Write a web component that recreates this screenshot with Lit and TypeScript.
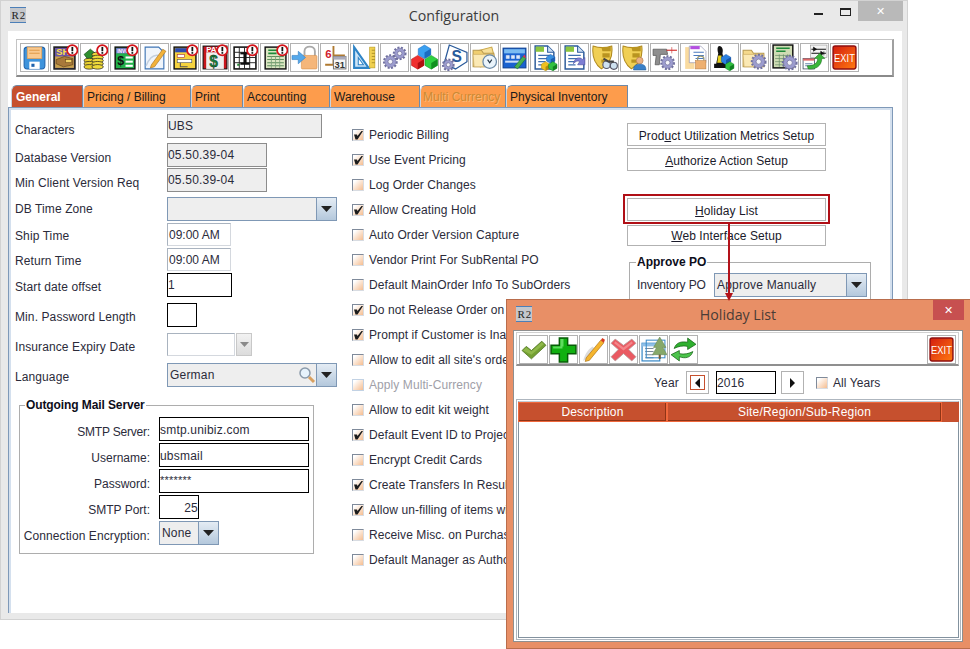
import { LitElement, css, html, svg } from "lit";
import { customElement } from "lit/decorators.js";

const gear = (x: number, y: number, r: number, fill = "#9c9ccf") => svg`
  <circle cx=${x} cy=${y} r=${r} fill="none" stroke="#6f6fa0" stroke-width="2.2" stroke-dasharray="1.9 1.4"></circle>
  <circle cx=${x} cy=${y} r=${r - 0.6} fill=${fill} stroke="#77779f" stroke-width=".6"></circle>
  <circle cx=${x} cy=${y} r=${r * 0.38} fill="#f4f4fa" stroke="#66668f" stroke-width=".6"></circle>`;

const alert = svg`
  <circle cx="20.5" cy="6" r="5" fill="#fff" stroke="#d3151b" stroke-width="1.7"></circle>
  <rect x="19.7" y="2.8" width="1.7" height="4.2" fill="#111"></rect>
  <rect x="19.7" y="7.8" width="1.7" height="1.6" fill="#111"></rect>`;

const cube = (x: number, y: number, s: number, c: string, d: string) => svg`
  <path d="M${x} ${y + s * 0.3}L${x + s * 0.5} ${y}L${x + s} ${y + s * 0.3}V${y + s * 0.8}L${x + s * 0.5} ${y + s * 1.1}L${x} ${y + s * 0.8}Z" fill=${c} stroke=${d} stroke-width=".5"></path>
  <path d="M${x + s * 0.5} ${y + s * 0.6}L${x + s} ${y + s * 0.3}V${y + s * 0.8}L${x + s * 0.5} ${y + s * 1.1}Z" fill=${d}></path>`;

const doc = svg`
  <path d="M4 2H16L22 8V24H4Z" fill="#fff" stroke="#2a5a9a" stroke-width="1.4"></path>
  <path d="M16 2V8H22" fill="#cfe0f4" stroke="#2a5a9a"></path>
  <rect x="4.5" y="2.5" width="8" height="5" fill="#8cc63f"></rect>
  <path d="M7 11H19M7 14H19M7 17H14M7 20H14" stroke="#3f6fb0" stroke-width="1.2"></path>`;

const shield = svg`
  <path d="M2 2C8 4 14 4 20 2C21 10 20 18 10 24C3 19 1 10 2 2Z" fill="#f0cf55" stroke="#b08a20"></path>
  <path d="M10 3H19V7H11ZM11 9H18V13H11ZM10 15H15V18H10Z" fill="#b99420"></path>`;

const folder = (fill = "#f5d98c") => svg`
  <path d="M2 6H10L12 9H22V22H2Z" fill=${fill} stroke="#b89a50"></path>
  <path d="M2 10H22L21 22H3Z" fill="#fbe9b4" stroke="#c8a860" stroke-width=".6"></path>`;

const exitIcon = svg`
  <defs><linearGradient id="ex" x1="0" y1="0" x2="1" y2="1"><stop offset="0" stop-color="#d41d10"></stop><stop offset="1" stop-color="#ff7a10"></stop></linearGradient></defs>
  <rect x="2" y="2" width="22" height="22" rx="2" fill="url(#ex)" stroke="#8f0f0f" stroke-width="1.4"></rect>
  <text x="13" y="17" text-anchor="middle" font-size="10" fill="#fff" textLength="20" lengthAdjust="spacingAndGlyphs" font-family="Liberation Sans, sans-serif">EXIT</text>`;

const TOP_ICONS = [
  // save
  svg`<rect x="3" y="3" width="20" height="21" rx="3" fill="#3d93dc" stroke="#1d62ad"></rect>
    <rect x="6" y="3" width="14" height="11" fill="#f9c98f" stroke="#e6a050" stroke-width=".7"></rect>
    <path d="M8 6H18M8 9H18" stroke="#e09a4a"></path>
    <rect x="8" y="17" width="10" height="7" fill="#fff"></rect><rect x="10" y="19" width="3" height="3" fill="#1d62ad"></rect>`,
  // ship
  svg`<rect x="3" y="3" width="20" height="21" fill="#6a55a8" stroke="#222" stroke-width="1.6"></rect>
    <rect x="4" y="12" width="18" height="11" fill="#c9a24a"></rect>
    <text x="5" y="11" font-size="9" font-weight="700" fill="#ffe24a" font-family="Liberation Sans, sans-serif">SH</text>
    <path d="M5 15L13 12L21 14V20L12 22L5 19Z" fill="#a8793a" stroke="#5a3d16" stroke-width=".6"></path>
    <rect x="14" y="15" width="6" height="3" fill="#f2d268" stroke="#5a3d16" stroke-width=".5"></rect>${alert}`,
  // coins
  svg`<path d="M3 10L9 5L15 10L9 18Z" fill="#2f8f2f" stroke="#14501a" stroke-width=".7"></path>
    ${[16, 19, 22].map((y) => svg`<ellipse cx="8" cy=${y} rx="5" ry="2.2" fill="#e8d030" stroke="#222" stroke-width=".7"></ellipse>`)}
    ${[10, 13, 16, 19, 22].map((y) => svg`<ellipse cx="16" cy=${y} rx="5.5" ry="2.2" fill="#f0da3a" stroke="#222" stroke-width=".7"></ellipse>`)}
    ${alert}`,
  // invoice
  svg`<rect x="4" y="3" width="19" height="21" fill="#22b04a" stroke="#111" stroke-width="1.4"></rect>
    <rect x="5" y="4" width="17" height="5" fill="#7b6fd0"></rect>
    <text x="6" y="8.4" font-size="4.6" font-weight="700" fill="#fff" font-family="Liberation Sans, sans-serif">INVC</text>
    <text x="6" y="20" font-size="12" font-weight="700" fill="#111" font-family="Liberation Sans, sans-serif">$</text>
    <rect x="14" y="12" width="7" height="2" fill="#fff"></rect><rect x="14" y="16" width="7" height="2" fill="#fff"></rect><rect x="14" y="20" width="7" height="2" fill="#fff"></rect>${alert}`,
  // document with pen
  svg`<path d="M4 3H17L22 8V24H4Z" fill="#f0f5fb" stroke="#3f75b5" stroke-width="1.1"></path>
    <path d="M5 21C8 13 12 10 17 11" fill="none" stroke="#c3cfdd" stroke-width="1.4"></path>
    <path d="M10 20L21 5L24 7L13 22L9 23Z" fill="#f2b23a" stroke="#a8701a" stroke-width=".6"></path>`,
  // yellow form
  svg`<rect x="3" y="3" width="21" height="21" fill="#f5d23e" stroke="#111" stroke-width="1.4"></rect>
    <rect x="4" y="4" width="19" height="4" fill="#2c4bb0"></rect>
    <rect x="6" y="10" width="7" height="3" fill="#fff" stroke="#a33" stroke-width=".6"></rect>
    <rect x="6" y="15" width="14" height="3" fill="#fff" stroke="#555" stroke-width=".6"></rect>
    <path d="M9 18V22H16" fill="none" stroke="#555"></path>${alert}`,
  // pay
  svg`<rect x="2" y="2" width="23" height="22" fill="#c8161c" stroke="#111"></rect>
    <rect x="5" y="8" width="17" height="16" fill="#eef0ee"></rect>
    <text x="5" y="8" font-size="7.5" font-weight="700" fill="#fff" font-family="Liberation Sans, sans-serif">PAY</text>
    <text x="8" y="22" font-size="15" font-weight="700" fill="#17803a" stroke="#111" stroke-width=".3" font-family="Liberation Sans, sans-serif">$</text>${alert}`,
  // grid
  svg`<rect x="3" y="3" width="21" height="21" fill="#fff" stroke="#111" stroke-width="1.5"></rect>
    <path d="M3 8H24M3 13H24M3 18H24M8 3V24M13 3V24M18 3V24" stroke="#222" stroke-width=".9"></path>
    <rect x="12" y="8" width="3" height="11" fill="#111"></rect><rect x="9" y="8" width="9" height="2" fill="#111"></rect><rect x="9" y="18" width="9" height="2" fill="#111"></rect>
    <rect x="6" y="19" width="2" height="2" fill="#2a8a3a"></rect>${alert}`,
  // green ledger
  svg`<rect x="4" y="3" width="20" height="21" fill="#dbe6c2" stroke="#111" stroke-width="1.4"></rect>
    <path d="M7 6H19M7 9H15" stroke="#1f8a3a" stroke-width="1.6"></path>
    <path d="M6 12H22M6 15H22M6 18H22M6 21H22" stroke="#5d8f5d"></path><path d="M10 12V23M14 12V23M18 12V23" stroke="#7aa07a" stroke-width=".8"></path>${alert}`,
  // lock and arrow
  svg`<path d="M13 11V7C13 1 23 1 23 7V12" fill="none" stroke="#a9a9a9" stroke-width="1.8"></path>
    <rect x="10" y="11" width="15" height="13" rx="1" fill="#f5b67a" stroke="#d8924e" stroke-width=".6"></rect>
    <path d="M1 11H7V7L14 13L7 19V15H1Z" fill="#55a8ea" stroke="#3580c4" stroke-width=".6"></path>`,
  // calendar steps
  svg`<path d="M12 2V11H23M12 11V20H4" fill="none" stroke="#b07a30" stroke-width="1.8"></path>
    <text x="4" y="13" font-size="11" font-weight="700" fill="#d02030" font-family="Liberation Sans, sans-serif">6</text>
    <rect x="12" y="12" width="12" height="12" fill="#f6f6f6" stroke="#777"></rect><rect x="12" y="12" width="12" height="3" fill="#aab"></rect>
    <text x="13" y="23" font-size="9" font-weight="700" fill="#333" font-family="Liberation Sans, sans-serif">31</text>`,
  // triangle and ruler
  svg`<path d="M3 3L17 23H3Z" fill="#cfe6f8" stroke="#2f84c6" stroke-width="2"></path><path d="M7 13L12 20H7Z" fill="#fff" stroke="#2f84c6"></path>
    <rect x="18" y="3" width="5" height="20" fill="#f0d050" stroke="#b89a20" stroke-width=".6"></rect>
    <path d="M20 6H23M20 9H23M20 12H23M20 15H23M20 18H23" stroke="#8a7010" stroke-width=".6"></path>`,
  // gears
  svg`${gear(9, 17, 6)}${gear(18, 9, 5.5)}`,
  // cubes
  svg`${cube(7, 1, 12, "#3aa0f0", "#1c6cc0")}${cube(0.5, 11, 12, "#f03030", "#b01010")}${cube(13.5, 11, 12, "#30d040", "#109020")}`,
  // dollar diamond
  svg`<path d="M8 1L25 8V17L14 24L3 19Z" fill="#fff" stroke="#2a5a9a" stroke-width="1.2"></path>
    <text x="10" y="17" font-size="15" font-weight="700" fill="#2a5a9a" font-family="Liberation Sans, sans-serif">S</text>${gear(7, 20, 5)}`,
  // folder clock
  svg`<path d="M5 7L20 3L24 18L9 22Z" fill="#f7df98" stroke="#caa84c"></path>${folder("#f0ce70")}
    <circle cx="18" cy="17" r="6.5" fill="#eaf4fb" stroke="#6a8aa8" stroke-width="1.2"></circle><path d="M16 15L18 18L20 15" fill="none" stroke="#234" stroke-width="1.1"></path>`,
  // blue form and pencil
  svg`<rect x="2" y="4" width="22" height="19" fill="#1a62d0" stroke="#0c3f90"></rect>
    <rect x="3" y="5" width="20" height="4" fill="#7bbcf2"></rect>
    <path d="M5 11H8V14H5ZM10 11H13V14H10ZM15 11H18V14H15Z" fill="#dfe9f8" stroke="#fff" stroke-width=".4"></path>
    <rect x="4" y="16" width="14" height="2" fill="#cfe0f6"></rect>
    <path d="M13 22L21 12L24 14L16 24Z" fill="#48b050" stroke="#1d6a28" stroke-width=".5"></path><path d="M21 12L24 14L23 10Z" fill="#e03050"></path>`,
  // document with cubes
  svg`${doc}${cube(15, 10, 8, "#3a90e0", "#1c5cb0")}${cube(10, 17, 8, "#f0c020", "#b08a10")}${cube(17, 17, 8, "#30c040", "#108020")}`,
  // document with arrow
  svg`${doc}<path d="M12 19C13 13 18 12 21 15L23 13V20H16L18 17C17 16 14 16 12 19Z" fill="#7d7fd4" stroke="#4d4fa0" stroke-width=".6"></path>`,
  // shield, binoculars
  svg`${shield}<circle cx="15" cy="20" r="3.6" fill="#cfe2f0" stroke="#556" stroke-width="1.1"></circle><circle cx="22" cy="21" r="3.4" fill="#cfe2f0" stroke="#556" stroke-width="1.1"></circle><path d="M12 14L17 17L22 17" stroke="#444" stroke-width="2" fill="none"></path>`,
  // shield, user
  svg`${shield}<circle cx="18" cy="16" r="3.3" fill="#eab184" stroke="#a76a3a" stroke-width=".5"></circle><path d="M12 25C12 20 15 19.500 18 19.500C21 19.500 24 20 24 25Z" fill="#3a80c8" stroke="#1f5a98" stroke-width=".5"></path>`,
  // scanner, gear
  svg`<path d="M2 5H15L16 10H9L8 20H4L5 11H2Z" fill="#8f8f8f" stroke="#555" stroke-width=".7"></path><path d="M15 6H25" stroke="#d01818"></path><path d="M20 3V9" stroke="#c33" stroke-width=".6"></path>${gear(16, 18, 6)}`,
  // folder, doc, lock
  svg`<path d="M4 3H13V24H4Z" fill="#f9dba0"></path><path d="M8 2H19L24 7V18H8Z" fill="#fff" stroke="#88a" stroke-width=".6"></path><rect x="9" y="2" width="9" height="3" fill="#b44fe0"></rect>
    <path d="M12 8H22M12 11H22M14 14H22" stroke="#4a7ac0"></path>
    <path d="M16 16V14C16 11 22 11 22 14V16" fill="none" stroke="#997" stroke-width="1.2"></path><rect x="14" y="16" width="10" height="8" fill="#eeb070" stroke="#b87a3a" stroke-width=".5"></rect>`,
  // chess piece, cubes
  svg`<path d="M8 2C11 2 12 6 11 9L13 19H15V23H3V19H5L7 9C6 6 6 2 8 2Z" fill="#111"></path><path d="M7 11H10L11 18H6Z" fill="#e8d020"></path>${cube(10, 10, 9, "#2c80e0", "#1656a8")}${cube(14, 17, 8, "#30c040", "#108020")}`,
  // folder, gear
  svg`${folder()}${gear(17, 17, 6.5)}`,
  // calculator, gear
  svg`<rect x="2" y="1" width="19" height="22" fill="#cfdcb4" stroke="#111" stroke-width="1.4"></rect><path d="M5 4H18M5 7H14" stroke="#1f8a3a" stroke-width="1.5"></path><path d="M4 11H19M4 14H19M4 17H14M4 20H12M8 10V22M12 10V22M16 10V16" stroke="#6a8f6a" stroke-width=".7"></path>${gear(18, 18, 6.5)}`,
  // swap
  svg`<rect x="9" y="1" width="16" height="12" fill="#f4f4f4" stroke="#999" stroke-width=".6"></rect><path d="M10 5H24M10 9H24" stroke="#111"></path><path d="M12 3V7M12 7L15 5L12 3M22 7V11M22 9L19 7V11Z" stroke="#111" fill="#111" stroke-width=".6"></path>
    <rect x="2" y="14" width="11" height="10" fill="#fff" stroke="#456" stroke-width=".8"></rect><rect x="2" y="14" width="11" height="2" fill="#d66"></rect><path d="M4 19H11M4 21H11" stroke="#68a"></path>
    <path d="M6 21C12 21 16 19 16 14H13L18 9L23 14H20C20 21 14 25 7 24Z" fill="#3ab53a" stroke="#1a6a1a" stroke-width=".5"></path>`,
  exitIcon,
];

const POP_ICONS = [
  // accept
  svg`<path d="M2 14L6 10L11 14L21 5L25 9L11 22Z" fill="#74a032" stroke="#4d7420" stroke-width=".8"></path><path d="M3 14L6 11L11 15L21 6L23 8L11 18Z" fill="#8fb84a"></path>`,
  // add
  svg`<path d="M9 2H17V9H25V17H17V25H9V17H1V9H9Z" fill="#10b010" stroke="#075c07" stroke-width="1.4"></path><path d="M10 3H13V10H10ZM3 10H12V12H3Z" fill="#5fdc5f"></path>`,
  // edit
  svg`<path d="M3 24C5 16 9 12 12 10L15 13C12 17 8 21 3 24Z" fill="#dcdcdc"></path><path d="M6 21L20 4L23 6.500L9 23.500L5 24.500Z" fill="#f5b52e" stroke="#a66c10" stroke-width=".6"></path><path d="M20 4L23 6.500L24 3.500L21.500 2Z" fill="#d83a20"></path>`,
  // delete
  svg`<path d="M5 3L13 9L21 3L25 7L18 13L25 20L21 24L13 17L5 24L1 20L8 13L1 7Z" fill="#ea5a62" stroke="#b8a0a0" stroke-width=".8"></path><path d="M5 5L13 11L21 5L22 7L13 14L4 7Z" fill="#f4868a"></path>`,
  // table and tree
  svg`<rect x="2" y="7" width="17" height="17" fill="#fff" stroke="#3b8ac8" stroke-width="1.2"></rect><rect x="2" y="7" width="17" height="3" fill="#8fc0e8"></rect>
    <path d="M5 12H13M5 15H13M5 18H13M5 21H13" stroke="#7a8a9a"></path><rect x="6" y="4" width="18" height="17" fill="none" stroke="#3b8ac8"></rect>
    <path d="M19 1L25 11H22L26 18H12L16 11H13Z" fill="#86a86a" stroke="#5f8050" stroke-width=".5"></path><rect x="18" y="18" width="2" height="4" fill="#7a5a30"></rect>`,
  // refresh
  svg`<path d="M4 12C6 6 11 5 17 6V2L25 8L17 13V10C12 9 8 10 4 12Z" fill="#2fb02f" stroke="#126012" stroke-width=".7"></path><path d="M22 15C20 21 15 22 9 20V24L1 18L9 14V17C14 18 18 17 22 15Z" fill="#4cc44c" stroke="#126012" stroke-width=".7"></path>`,
];

const r2Logo = html`<svg class="logo" viewBox="0 0 16 16" width="16" height="16">
  <rect width="16" height="16" fill="#c4c7cc"></rect>
  <rect width="16" height="1" fill="#4c7fb8"></rect><rect y="15" width="16" height="1" fill="#4c7fb8"></rect>
  <text x="1.500" y="12" font-size="11" letter-spacing=".8" fill="#222" font-family="Liberation Serif, serif">R2</text>
</svg>`;

const arrowDown = html`<svg viewBox="0 0 11 6" width="11" height="6"><path d="M0 0H11L5.500 6Z" fill="#222"></path></svg>`;

const LEFT_ROWS = [
  { label: "Characters", gap: 0, h: 24, dy: 4, kind: "ro", w: 155, text: "UBS" },
  { label: "Database Version", gap: 5, h: 24, dy: 3, kind: "ro", w: 100, text: "05.50.39-04" },
  { label: "Min Client Version Req", gap: 1, h: 24, dy: 3, kind: "ro", w: 100, text: "05.50.39-04" },
  { label: "DB Time Zone", gap: 5, h: 24, dy: 0, kind: "combo", w: 170, text: "" },
  { label: "Ship Time", gap: 2, h: 23, dy: 1, kind: "soft", w: 64, text: "09:00 AM" },
  { label: "Return Time", gap: 2, h: 23, dy: 1, kind: "soft", w: 64, text: "09:00 AM" },
  { label: "Start date offset", gap: 2, h: 24, dy: 2, kind: "blk", w: 65, text: "1" },
  { label: "Min. Password Length", gap: 6, h: 24, dy: 2, kind: "blk", w: 30, text: "" },
  { label: "Insurance Expiry Date", gap: 6, h: 23, dy: 2, kind: "date", w: 68, text: "" },
  { label: "Language", gap: 7, h: 24, dy: 2, kind: "lang", w: 170, text: "German" },
];

const CHECKS: [string, boolean, boolean?][] = [
  ["Periodic Billing", true],
  ["Use Event Pricing", true],
  ["Log Order Changes", false],
  ["Allow Creating Hold", true],
  ["Auto Order Version Capture", false],
  ["Vendor Print For SubRental PO", false],
  ["Default MainOrder Info To SubOrders", false],
  ["Do not Release Order on", true],
  ["Prompt if Customer is Inactive", true],
  ["Allow to edit all site's orders", false],
  ["Apply Multi-Currency", false, true],
  ["Allow to edit kit weight", false],
  ["Default Event ID to Project", true],
  ["Encrypt Credit Cards", false],
  ["Create Transfers In Result", true],
  ["Allow un-filling of items with", true],
  ["Receive Misc. on Purchase", false],
  ["Default Manager as Author", false],
];

const TABS = [
  { name: "General", w: 72, cls: "active" },
  { name: "Pricing / Billing", w: 108, cls: "" },
  { name: "Print", w: 52, cls: "" },
  { name: "Accounting", w: 87, cls: "" },
  { name: "Warehouse", w: 90, cls: "" },
  { name: "Multi Currency", w: 86, cls: "off" },
  { name: "Physical Inventory", w: 122, cls: "" },
];

@customElement("app-root")
export class AppRoot extends LitElement {
  private checkbox(on: boolean, off = false) {
    return html`<span class="cb ${off ? "cb-off" : ""}">
      ${on
        ? html`<svg viewBox="0 0 12 12" width="12" height="12"><path d="M2 5.500H5L5.500 7L9.500 2H11L5.500 10.500H3.500Z" fill="#1c1c1c"></path></svg>`
        : ""}
    </span>`;
  }

  private combo(text: string, width: number, search = false) {
    return html`<div class="combo" style="width:${width}px">
      <span class="combo-text">${text}</span>
      ${search
        ? html`<svg class="lens" viewBox="0 0 18 18" width="18" height="18">
            <circle cx="7" cy="7" r="5" fill="#e6f2fb" stroke="#8a9aaa" stroke-width="1.500"></circle>
            <path d="M11 11L16 16" stroke="#d8a060" stroke-width="3"></path>
          </svg>`
        : ""}
      <span class="combo-btn">${arrowDown}</span>
    </div>`;
  }

  private field(r: (typeof LEFT_ROWS)[number]) {
    if (r.kind === "combo") return this.combo(r.text, r.w);
    if (r.kind === "lang") return this.combo(r.text, r.w, true);
    if (r.kind === "date") {
      return html`<div class="date">
        <div class="fld soft" style="width:${r.w}px"></div>
        <span class="date-btn"><svg viewBox="0 0 9 5" width="9" height="5"><path d="M0 0H9L4.500 5Z" fill="#8a8a8a"></path></svg></span>
      </div>`;
    }
    return html`<div class="fld ${r.kind}" style="width:${r.w}px">${r.text}</div>`;
  }

  private tool(icon: unknown, extra = "") {
    return html`<span class="tb ${extra}"><svg viewBox="0 0 26 26" width="27" height="27">${icon}</svg></span>`;
  }

  render() {
    return html`
      <section class="win main">
        <header class="titlebar">
          ${r2Logo}
          <span class="title">Configuration</span>
          <span class="ctl min"></span>
          <span class="ctl max"></span>
          <span class="ctl close">✕</span>
        </header>
        <div class="client">
          <div class="toolbar">${TOP_ICONS.map((i) => this.tool(i))}</div>
          <div class="tabs">
            ${TABS.map((t) => html`<div class="tab ${t.cls}" style="width:${t.w}px">${t.name}</div>`)}
          </div>
          <div class="panel">
            <div class="col-left">
              ${LEFT_ROWS.map(
                (r) => html`<div class="row" style="height:${r.h}px;margin-top:${r.gap}px">
                  <span class="lbl" style="top:${r.dy}px">${r.label}</span>
                  ${this.field(r)}
                </div>`
              )}
              <fieldset class="mail">
                <legend>Outgoing Mail Server</legend>
                <div class="mail-grid">
                  <span class="mlbl tight">SMTP Server:</span><div class="fld blk mw">smtp.unibiz.com</div>
                  <span class="mlbl">Username:</span><div class="fld blk mw">ubsmail</div>
                  <span class="mlbl">Password:</span><div class="fld blk mw pw">*******</div>
                  <span class="mlbl">SMTP Port:</span><div class="fld blk port">25</div>
                  <span class="mlbl wide">Connection Encryption:</span>${this.combo("None", 60)}
                </div>
              </fieldset>
            </div>
            <div class="col-mid">
              ${CHECKS.map(
                ([t, on, off]) => html`<div class="chk ${off ? "chk-off" : ""}">${this.checkbox(on, off)}<span>${t}</span></div>`
              )}
            </div>
            <div class="col-right">
              <button class="btn">Prod<u>u</u>ct Utilization Metrics Setup</button>
              <button class="btn"><u>A</u>uthorize Action Setup</button>
              <button class="btn holiday"><u>H</u>oliday List</button>
              <button class="btn web"><u>W</u>eb Interface Setup</button>
              <fieldset class="approve">
                <legend>Approve PO</legend>
                <div class="approve-row"><span class="inv">Inventory PO</span>${this.combo("Approve Manually", 153)}</div>
              </fieldset>
            </div>
          </div>
        </div>
      </section>

      <div class="highlight"></div>

      <section class="win popup">
        <header class="titlebar pop-title">
          ${r2Logo}
          <span class="title">Holiday List</span>
          <span class="ctl pop-close">✕</span>
        </header>
        <div class="pop-client">
          <div class="pop-tools">
            ${POP_ICONS.map((i) => this.tool(i))}
            ${this.tool(exitIcon, "push")}
          </div>
          <div class="year-row">
            <span class="year-lbl">Year</span>
            <span class="nav"><span class="nav-focus"><svg viewBox="0 0 5 10" width="5" height="10"><path d="M5 0V10L0 5Z" fill="#111"></path></svg></span></span>
            <div class="fld blk year">2016</div>
            <span class="nav"><svg viewBox="0 0 5 10" width="5" height="10"><path d="M0 0V10L5 5Z" fill="#111"></path></svg></span>
            <div class="chk all">${this.checkbox(false)}<span>All Years</span></div>
          </div>
          <div class="tbl">
            <div class="tbl-in">
              <div class="thead">
                <span class="th d">Description</span>
                <span class="th s">Site/Region/Sub-Region</span>
              </div>
            </div>
          </div>
        </div>
      </section>

      <svg class="arrow" viewBox="0 0 10 77" width="10" height="77">
        <path d="M5 0V72" stroke="#b3121a" stroke-width="2"></path>
        <path d="M1 69H9L5 77Z" fill="#b3121a"></path>
      </svg>
    `;
  }

  static styles = css`
    :host {
      display: block;
      position: relative;
      width: 970px;
      height: 649px;
      overflow: hidden;
      background: #fff;
      font-family: "Liberation Sans", Arial, sans-serif;
      font-size: 12px;
      color: #2b2b3a;
    }

    .win {
      position: absolute;
      box-sizing: border-box;
      display: flex;
      flex-direction: column;
    }

    .main {
      left: 0;
      top: 0;
      width: 908px;
      height: 620px;
      background: #e9e9e9;
      border: 1px solid #d2d2d2;
    }

    .titlebar {
      position: relative;
      flex: none;
      height: 30px;
      padding-bottom: 2px;
      box-sizing: border-box;
      display: flex;
      align-items: center;
      justify-content: center;
    }

    .logo {
      position: absolute;
      left: 9px;
      top: 6px;
    }

    .title {
      font-family: "Open Sans", sans-serif;
      font-size: 14.2px;
      color: #3c3c3c;
    }

    .ctl {
      position: absolute;
      box-sizing: border-box;
    }

    .min {
      left: 813px;
      top: 12px;
      width: 9px;
      height: 2px;
      background: #222;
    }

    .max {
      left: 839px;
      top: 7px;
      width: 11px;
      height: 8px;
      border: 1px solid #222;
      border-top-width: 2px;
    }

    .close {
      left: 857px;
      top: 0;
      width: 45px;
      height: 20px;
      background: #b9b9b9;
      color: #fff;
      font-size: 11px;
      line-height: 20px;
      text-align: center;
    }

    .client {
      flex: 1;
      min-height: 0;
      margin: 0 5px 6px 7px;
      padding-top: 8px;
      background: #fff;
      display: flex;
      flex-direction: column;
    }

    .toolbar {
      flex: none;
      box-sizing: border-box;
      width: 878px;
      height: 38px;
      margin-left: 8px;
      padding: 3px;
      display: flex;
      gap: 1px;
      border: 1px solid #c4c4c4;
      border-bottom: 2px solid #8a8a8a;
      border-right: 2px solid #a0a0a0;
    }

    .tb {
      flex: none;
      box-sizing: border-box;
      width: 29px;
      height: 29px;
      border: 1px solid #b2b2b2;
      background: #fff;
      display: block;
    }

    .tb svg {
      display: block;
    }

    .push {
      margin-left: auto;
    }

    .tabs {
      flex: none;
      display: flex;
      height: 22px;
      margin: 8px 0 0 3px;
    }

    .tab {
      box-sizing: border-box;
      height: 22px;
      padding: 4px 0 0 3px;
      background: #fd9c4c;
      border: 1px solid #6f8aa8;
      border-bottom: none;
      border-left-color: #c9d4e0;
      border-top-left-radius: 6px;
      color: #1a1a1a;
      white-space: nowrap;
    }

    .tab.active {
      background: #c6502e;
      color: #fff;
      font-weight: 700;
      padding-left: 4px;
    }

    .tab.off {
      padding-left: 2px;
      color: #c98a34;
      text-shadow: 1px 1px 0 #ffb877;
    }

    .panel {
      flex: 1;
      min-height: 0;
      box-sizing: border-box;
      width: 885px;
      display: flex;
      border: 1px solid #7f99b8;
      border-bottom: none;
      box-shadow: inset 2px 0 #d4e0ee, inset -2px 0 #d4e0ee, inset 0 2px #d4e0ee;
    }

    .col-left {
      flex: none;
      width: 343px;
      padding: 6px 0 0 6px;
      box-sizing: border-box;
    }

    .row {
      display: flex;
      align-items: center;
    }

    .lbl {
      position: relative;
      flex: none;
      width: 152px;
      white-space: nowrap;
      letter-spacing: 0.1px;
    }

    .fld {
      box-sizing: border-box;
      height: 100%;
      display: flex;
      align-items: center;
      white-space: nowrap;
      letter-spacing: 0.2px;
    }

    .ro {
      background: #eeeeee;
      border: 1px solid #8c8c8c;
    }

    .soft {
      padding-left: 1px;
      letter-spacing: 0;
      background: #fff;
      border: 1px solid #a9b3bf;
      border-right-color: #d4d8de;
      border-bottom-color: #d4d8de;
    }

    .blk {
      background: #fff;
      border: 1px solid #000;
    }

    .combo {
      box-sizing: border-box;
      position: relative;
      height: 24px;
      display: flex;
      background: #eeeeee;
      border: 1px solid #7f98b5;
      flex: none;
    }

    .combo-text {
      flex: 1;
      padding: 1px 0 0 2px;
      line-height: 20px;
      letter-spacing: 0.2px;
      white-space: nowrap;
      overflow: hidden;
      border-right: 1px solid #7f98b5;
    }

    .combo-btn {
      flex: none;
      width: 19px;
      display: flex;
      align-items: center;
      justify-content: center;
      background: linear-gradient(#e4ecf4, #b4c8dc);
    }

    .lens {
      position: absolute;
      right: 20px;
      top: 2px;
    }

    .date {
      display: flex;
      height: 100%;
      gap: 1px;
    }

    .date-btn {
      width: 16px;
      display: flex;
      align-items: center;
      justify-content: center;
      background: linear-gradient(#f2f2f2, #dcdcdc);
      border: 1px solid #c8c8c8;
      box-sizing: border-box;
    }

    fieldset {
      box-sizing: border-box;
      margin: 0;
      border: 1px solid #adadad;
    }

    legend {
      font-weight: 700;
      color: #0d0d1a;
      padding: 0 1px;
    }

    .mail {
      width: 295px;
      height: 156px;
      margin: 11px 0 0 4px;
      padding: 5px 0 0 0;
    }

    .mail legend {
      margin-left: 5px;
      letter-spacing: -0.1px;
    }

    .mail-grid {
      display: grid;
      grid-template-columns: 130px 150px;
      grid-auto-rows: 24px;
      column-gap: 9px;
      row-gap: 2px;
    }

    .mlbl {
      align-self: center;
      padding-top: 6px;
      text-align: right;
      white-space: nowrap;
    }

    .tight {
      letter-spacing: -0.2px;
    }

    .wide {
      letter-spacing: 0.1px;
    }

    .mail-grid .fld {
      padding-top: 1px;
    }

    .mw {
      width: 150px;
    }

    .mail-grid .pw {
      align-items: flex-start;
      padding-top: 4px;
      font-size: 11px;
    }

    .port {
      width: 40px;
      justify-content: flex-end;
    }

    .col-mid {
      flex: none;
      width: 275px;
      padding-top: 14px;
      box-sizing: border-box;
    }

    .chk {
      height: 25px;
      display: flex;
      align-items: center;
      gap: 5px;
      white-space: nowrap;
      letter-spacing: 0.08px;
    }

    .chk-off {
      color: #a0a0a8;
    }

    .cb {
      flex: none;
      box-sizing: border-box;
      width: 12px;
      height: 12px;
      border: 1px solid #7f8a9a;
      border-right-color: #d8dce2;
      border-bottom-color: #d8dce2;
      background: linear-gradient(135deg, #fff 15%, #f5bd90);
      display: block;
    }

    .cb svg {
      display: block;
      margin: -1px;
    }

    .cb-off {
      border-color: #c2d2e4;
    }

    .col-right {
      flex: none;
      padding-top: 15px;
      width: 245px;
      box-sizing: border-box;
      position: relative;
    }

    .btn {
      display: block;
      box-sizing: border-box;
      width: 199px;
      height: 23px;
      margin-bottom: 2px;
      padding: 3px 0 0;
      background: #fff;
      border: 1px solid #b2b2b2;
      font: inherit;
      color: #1a1a2a;
      letter-spacing: 0.06px;
    }

    .holiday {
      margin-top: 27px;
      margin-bottom: 4px;
    }

    .web {
      height: 21px;
      padding-top: 0;
    }

    .approve {
      width: 242px;
      height: 70px;
      margin: 9px 0 0 2px;
      padding: 4px 0 0 7px;
    }

    .approve legend {
      margin-left: -1px;
    }

    .approve-row {
      display: flex;
      align-items: center;
    }

    .inv {
      width: 77px;
      letter-spacing: -0.1px;
    }

    .highlight {
      position: absolute;
      box-sizing: border-box;
      left: 623px;
      top: 194px;
      width: 207px;
      height: 30px;
      border: 2px solid #b00f16;
    }

    .arrow {
      position: absolute;
      left: 724px;
      top: 224px;
    }

    .popup {
      left: 506px;
      top: 299px;
      width: 470px;
      height: 350px;
      background: #e88f66;
      border: 1px solid #b96d4c;
    }

    .pop-title {
      width: 462px;
    }

    .pop-title .title {
      color: #4a3c36;
    }

    .pop-close {
      right: 5px;
      top: 0;
      width: 31px;
      height: 20px;
      background: #c75050;
      color: #fff;
      font-size: 11px;
      line-height: 20px;
      text-align: center;
    }

    .pop-client {
      box-sizing: border-box;
      width: 450px;
      height: 312px;
      margin-left: 6px;
      padding: 1px 1px 1px 2px;
      background: #fff;
      border: 1px solid #8f8f8f;
      display: flex;
      flex-direction: column;
    }

    .pop-tools {
      flex: none;
      box-sizing: border-box;
      height: 34px;
      width: 443px;
      padding: 2px;
      display: flex;
      gap: 1px;
      border: 1px solid #d0d0d0;
      border-bottom: 2px solid #8f8f8f;
    }

    .year-row {
      flex: none;
      height: 33px;
      padding-left: 138px;
      display: flex;
      align-items: center;
    }

    .year-lbl {
      width: 25px;
      margin: 1px 7px 0 0;
      letter-spacing: 0.2px;
    }

    .nav {
      flex: none;
      box-sizing: border-box;
      width: 23px;
      height: 23px;
      border: 1px solid #b2b2b2;
      display: flex;
      align-items: center;
      justify-content: center;
    }

    .nav-focus {
      box-sizing: border-box;
      width: 15px;
      height: 15px;
      border: 1px solid #c6502e;
      display: flex;
      align-items: center;
      justify-content: center;
    }

    .year {
      width: 60px;
      height: 23px;
      margin: 0 5px 0 7px;
      flex: none;
    }

    .all {
      margin-left: 12px;
      height: auto;
    }

    .tbl {
      flex: 1;
      min-height: 0;
      box-sizing: border-box;
      border: 1px solid #aeb6bf;
      padding: 1px;
    }

    .tbl-in {
      box-sizing: border-box;
      height: 100%;
      border: 1px solid #83929f;
      border-top-color: #c5ccd4;
    }

    .thead {
      display: flex;
      height: 20px;
      margin: 0 -1px;
      background: #c6502e;
    }

    .th {
      box-sizing: border-box;
      height: 20px;
      line-height: 18px;
      text-align: center;
      color: #fff;
      letter-spacing: 0.2px;
      border: 1px solid #f0683c;
      box-shadow: inset -1px -1px #8f3416;
    }

    .th.d {
      width: 149px;
    }

    .th.s {
      width: 275px;
    }
  `;
}

declare global {
  interface HTMLElementTagNameMap {
    "app-root": AppRoot;
  }
}
